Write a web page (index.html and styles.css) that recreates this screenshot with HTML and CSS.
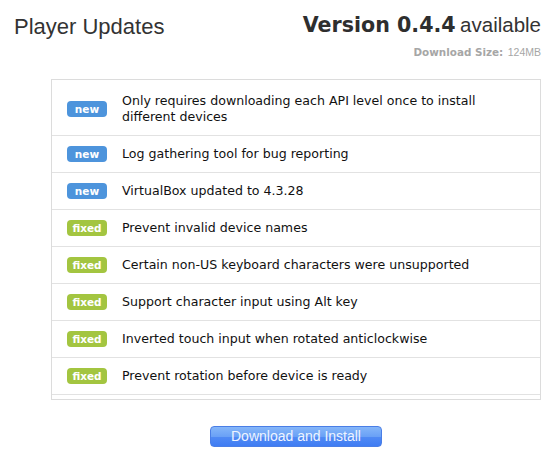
FILE: index.html
```html
<!DOCTYPE html>
<html>
<head>
<meta charset="utf-8">
<link rel="stylesheet" href="styles.css">
</head>
<body>
<div class="header">
  <h1 class="title">Player Updates</h1>
  <div class="version-info">
    <div class="version"><span class="version-num">Version 0.4.4</span> <span class="avail">available</span></div>
    <div class="size"><span class="size-label">Download Size:</span> <span class="size-val">124MB</span></div>
  </div>
</div>
<div class="list">
  <div class="row tall"><span class="badge new">new</span><span class="text">Only requires downloading each API level once to install different devices</span></div>
  <div class="row"><span class="badge new">new</span><span class="text">Log gathering tool for bug reporting</span></div>
  <div class="row"><span class="badge new">new</span><span class="text">VirtualBox updated to 4.3.28</span></div>
  <div class="row"><span class="badge fixed">fixed</span><span class="text">Prevent invalid device names</span></div>
  <div class="row"><span class="badge fixed">fixed</span><span class="text">Certain non-US keyboard characters were unsupported</span></div>
  <div class="row"><span class="badge fixed">fixed</span><span class="text">Support character input using Alt key</span></div>
  <div class="row"><span class="badge fixed">fixed</span><span class="text">Inverted touch input when rotated anticlockwise</span></div>
  <div class="row"><span class="badge fixed">fixed</span><span class="text">Prevent rotation before device is ready</span></div>
</div>
<div class="actions">
  <button class="install">Download and Install</button>
</div>
</body>
</html>
```
FILE: styles.css
```css
html, body {
  margin: 0;
  padding: 0;
  background: #ffffff;
}
body {
  width: 559px;
  height: 462px;
  overflow: hidden;
  font-family: "Liberation Sans", Arial, sans-serif;
}
.header {
  display: flex;
  justify-content: space-between;
  align-items: flex-start;
  padding: 0 18px 0 14px;
  height: 79px;
}
.title {
  margin: 14px 0 0 0;
  font-family: "Liberation Sans", Arial, sans-serif;
  font-weight: normal;
  font-size: 22px;
  line-height: 25px;
  color: #333333;
}
.version-info {
  display: flex;
  flex-direction: column;
  align-items: flex-end;
  margin-top: 13px;
}
.version {
  line-height: 24px;
  color: #2e2e2e;
  white-space: nowrap;
}
.version-num {
  font-family: "DejaVu Sans", sans-serif;
  font-weight: bold;
  font-size: 20.6px;
}
.avail {
  font-family: "Liberation Sans", Arial, sans-serif;
  font-size: 20.5px;
  color: #333333;
}
.size {
  margin-top: 6px;
  line-height: 12px;
  white-space: nowrap;
}
.size-label {
  font-family: "DejaVu Sans", sans-serif;
  font-weight: bold;
  font-size: 10.4px;
  color: #a6a6a6;
}
.size-val {
  font-family: "Liberation Sans", Arial, sans-serif;
  font-size: 10.5px;
  color: #a6a6a6;
}
.list {
  margin-left: 51px;
  width: 490px;
  box-sizing: border-box;
  border: 1px solid #dcdcdc;
  padding-bottom: 4px;
}
.row {
  display: flex;
  align-items: center;
  gap: 15px;
  padding: 10px 15px;
  border-bottom: 1px solid #e2e2e2;
}
.row.tall {
  padding-top: 13px;
  padding-bottom: 10px;
}
.badge {
  flex: none;
  width: 40px;
  height: 16px;
  border-radius: 4px;
  color: #ffffff;
  font-family: "DejaVu Sans", sans-serif;
  font-weight: bold;
  font-size: 10.5px;
  line-height: 16px;
  text-align: center;
}
.badge.new {
  background: #4d94dc;
}
.badge.fixed {
  background: #a3c540;
}
.text {
  font-family: "DejaVu Sans", sans-serif;
  font-size: 12.6px;
  line-height: 16px;
  color: #111111;
}
.actions {
  margin-left: 51px;
  width: 490px;
  display: flex;
  justify-content: center;
  margin-top: 26px;
}
.install {
  width: 172px;
  height: 21px;
  box-sizing: border-box;
  padding: 0;
  border: 1px solid #4a7ee6;
  border-radius: 4px;
  background: linear-gradient(to bottom, #85b6f9 0%, #6aa1f6 50%, #4f89f4 55%, #3f7cf3 100%);
  color: #eef4ff;
  font-family: "Liberation Sans", Arial, sans-serif;
  font-size: 14px;
  line-height: 19px;
}
```
